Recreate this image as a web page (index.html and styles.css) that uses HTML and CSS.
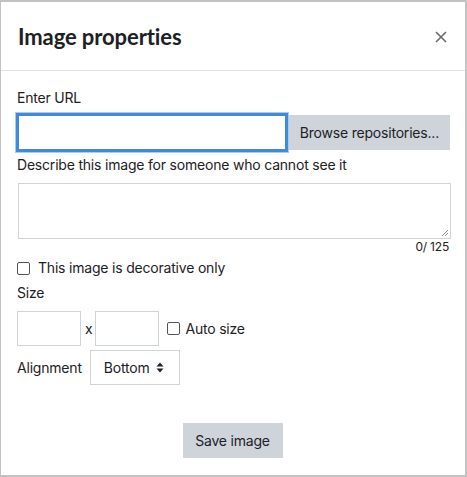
FILE: index.html
```html
<!DOCTYPE html>
<html>
<head>
<meta charset="utf-8">
<link rel="stylesheet" href="styles.css">
</head>
<body>
<div class="modal">
  <div class="modal-header">
    <h1 class="title">Image properties</h1>
    <svg class="close" width="12" height="12" viewBox="0 0 12 12"><path d="M1 1 L11 11 M11 1 L1 11" stroke="#6a6a6a" stroke-width="1.6" fill="none"/></svg>
  </div>
  <div class="modal-body">
    <label class="label">Enter URL</label>
    <div class="url-row">
      <div class="url-input"></div>
      <div class="btn btn-browse">Browse repositories...</div>
    </div>
    <label class="label label-desc">Describe this image for someone who cannot see it</label>
    <div class="textarea">
      <svg class="grip" width="8" height="8" viewBox="0 0 8 8"><path d="M7 1 L1 7 M7 4 L4 7" stroke="#777" stroke-width="0.8" fill="none"/></svg>
    </div>
    <div class="counter">0/ 125</div>
    <div class="check-row">
      <span class="checkbox"></span>
      <span>This image is decorative only</span>
    </div>
    <div class="label label-size">Size</div>
    <div class="size-row">
      <div class="small-input"></div>
      <span class="times">x</span>
      <div class="small-input"></div>
      <span class="checkbox"></span>
      <span class="auto">Auto size</span>
    </div>
    <div class="align-row">
      <span>Alignment</span>
      <div class="select">
        <span>Bottom</span>
        <svg class="arrows" width="8" height="11" viewBox="0 0 8 11"><path d="M4 0.5 L7.5 4.5 L0.5 4.5 Z M4 10.5 L0.5 6.5 L7.5 6.5 Z" fill="#222"/></svg>
      </div>
    </div>
    <div class="footer">
      <div class="btn btn-save">Save image</div>
    </div>
  </div>
</div>
</body>
</html>
```
FILE: styles.css
```css
* { box-sizing: border-box; }
html, body { margin: 0; padding: 0; background: #fff; }
body {
  font-family: Inter, "Liberation Sans", sans-serif;
  font-size: 14px;
  letter-spacing: -0.2px;
  color: #1d2125;
}
.modal {
  width: 467px;
  height: 477px;
  border-top: 2px solid #c2c2c2;
  border-left: 1px solid #c2c2c2;
  border-right: 2px solid #c2c2c2;
  border-bottom: 2px solid #c2c2c2;
  background: #fff;
}
.modal-header {
  height: 69px;
  border-bottom: 1px solid #dee2e6;
  display: flex;
  align-items: center;
  justify-content: space-between;
  padding: 0 18px 0 17px;
}
.title {
  margin: 0;
  font-family: Lato, sans-serif;
  font-weight: 700;
  font-size: 22px;
  color: #1d2125;
  letter-spacing: -0.1px;
}
.close {
  margin-top: 2px;
  flex: none;
}
.modal-body {
  padding: 17px 15px 0 16px;
}
.label { display: block; line-height: 20px; }
.url-row {
  display: flex;
  margin-top: 5px;
  height: 39px;
  align-items: center;
}
.url-input {
  margin-left: -1px;
  width: 273px;
  height: 39px;
  border: 3px solid #3d8bd9;
  box-shadow: 0 0 0 1px #a9ccef;
  background: #fff;
}
.btn {
  background: #ced4da;
  color: #1d2125;
  display: flex;
  align-items: center;
  justify-content: center;
}
.btn-browse {
  margin-left: 1px;
  width: 162px;
  height: 35px;
}
.label-desc { margin-top: 3px; }
.textarea {
  margin-top: 8px;
  margin-left: 1px;
  width: 433px;
  height: 56px;
  border: 1px solid #ced4da;
  position: relative;
}
.grip { position: absolute; right: 1px; bottom: 1px; }
.counter {
  text-align: right;
  font-size: 12px;
  line-height: 16px;
  color: #1d2125;
  padding-right: 1px;
}
.check-row {
  display: flex;
  align-items: center;
  gap: 8px;
  margin-top: 3px;
  margin-left: 0;
  line-height: 20px;
}
.checkbox {
  width: 13px;
  height: 13px;
  border: 1px solid #555;
  border-radius: 2px;
  display: inline-block;
  flex: none;
}
.label-size { margin-top: 5px; }
.size-row {
  display: flex;
  align-items: center;
  margin-top: 8px;
}
.small-input {
  width: 64px;
  height: 35px;
  border: 1px solid #ced4da;
}
.times { margin: 0 3px 0 4px; }
.size-row .checkbox { margin-left: 8px; margin-right: 5px; }
.align-row {
  display: flex;
  align-items: center;
  margin-top: 4px;
  gap: 8px;
}
.select {
  width: 90px;
  height: 35px;
  border: 1px solid #ced4da;
  display: flex;
  align-items: center;
  justify-content: space-between;
  padding: 0 15px 0 13px;
}
.footer {
  display: flex;
  justify-content: center;
  margin-top: 38px;
  padding-right: 2px;
}
.btn-save {
  width: 100px;
  height: 35px;
}
```
